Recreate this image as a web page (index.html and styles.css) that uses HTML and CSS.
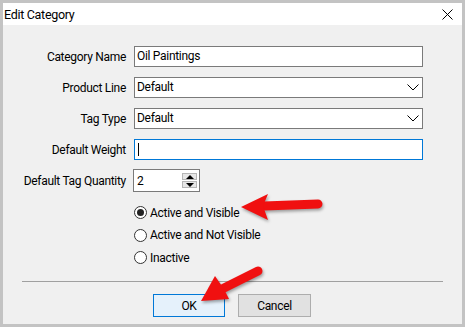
FILE: index.html
```html
<!DOCTYPE html>
<html lang="en">
<head>
  <meta charset="UTF-8" />
  <title>Edit Category</title>
  <link rel="stylesheet" href="styles.css">
</head>
<body>
  <div class="window">
    <div class="titlebar">
      <span class="title">Edit Category</span>
      <svg class="close" width="11" height="11" viewBox="0 0 11 11">
        <path d="M0.5 0.5 L10.5 10.5 M10.5 0.5 L0.5 10.5" stroke="#000" stroke-width="1" fill="none" />
      </svg>
    </div>

    <div class="content">
      <div class="form">
        <label>Category Name</label>
        <div class="field">Oil Paintings</div>

        <label>Product Line</label>
        <div class="field select">
          <span>Default</span>
          <svg class="chevron" width="12" height="7" viewBox="0 0 12 7"><polyline points="0.5,0.5 6,6 11.5,0.5" stroke="#000" fill="none" /></svg>
        </div>

        <label>Tag Type</label>
        <div class="field select">
          <span>Default</span>
          <svg class="chevron" width="12" height="7" viewBox="0 0 12 7"><polyline points="0.5,0.5 6,6 11.5,0.5" stroke="#000" fill="none" /></svg>
        </div>

        <label>Default Weight</label>
        <div class="field focused"><span class="caret"></span></div>

        <label class="spin-label">Default Tag Quantity</label>
        <div class="spin">
          <span>2</span>
          <div class="spin-btns">
            <span class="spin-btn"><i class="tri-up"></i></span>
            <span class="spin-btn"><i class="tri-down"></i></span>
          </div>
        </div>
      </div>

      <div class="radios">
        <div class="radio-row"><span class="radio checked"></span>Active and Visible</div>
        <div class="radio-row"><span class="radio"></span>Active and Not Visible</div>
        <div class="radio-row"><span class="radio"></span>Inactive</div>
      </div>

      <div class="sep"></div>

      <div class="buttons">
        <button class="btn primary">OK</button>
        <button class="btn">Cancel</button>
      </div>
    </div>
  </div>

  <!-- annotation arrows drawn over the dialog -->
  <svg class="arrows" width="465" height="327" viewBox="0 0 465 327">
    <line x1="264" y1="206" x2="318" y2="204" stroke="#f01010" stroke-width="9" stroke-linecap="round" />
    <polygon points="241,207 268,194 263,206 268,220" fill="#f01010" />
    <line x1="224" y1="288" x2="258" y2="271" stroke="#f01010" stroke-width="9" stroke-linecap="round" />
    <polygon points="201,301 215,276 224,289 229,299" fill="#f01010" />
  </svg>
</body>
</html>
```

FILE: styles.css
```css
body {
  margin: 0;
  font-family: Roboto, "Liberation Sans", sans-serif;
  font-size: 12px;
  letter-spacing: -0.3px;
  color: #000;
}
.window {
  width: 465px;
  height: 327px;
  box-sizing: border-box;
  border: 3px solid #c3c3c3;
  background: #f0f0f0;
}
.titlebar {
  height: 22px;
  background: #fff;
  display: flex;
  align-items: center;
  justify-content: space-between;
  padding: 0 9px 0 1px;
}
.title {
  font-size: 12.5px;
}
.close {
  display: block;
  margin-top: 1px;
}
.content {
  height: 299px;
  padding-top: 21px;
  box-sizing: border-box;
}
.form {
  display: grid;
  grid-template-columns: 123px 289px;
  grid-template-rows: 21px 21px 21px 21px 23px;
  column-gap: 8px;
  row-gap: 10px;
}
.form label {
  display: flex;
  align-items: center;
  justify-content: flex-end;
}
.field {
  box-sizing: border-box;
  height: 21px;
  background: #fff;
  border: 1px solid #7a7a7a;
  display: flex;
  align-items: center;
  justify-content: space-between;
  padding: 0 3px 1px 2px;
}
.field.focused {
  border-color: #0078d7;
}
.chevron {
  display: block;
  margin-top: 1px;
}
.caret {
  width: 1px;
  height: 13px;
  background: #000;
  margin-left: 1px;
}
.spin-label {
  margin-top: -1px;
}
.spin {
  margin-top: -1px;
  margin-left: -1px;
  box-sizing: border-box;
  width: 67px;
  height: 23px;
  background: #fff;
  border: 1px solid #7a7a7a;
  display: flex;
  align-items: center;
  justify-content: space-between;
  padding: 0 2px 0 3px;
}
.spin-btns {
  display: flex;
  flex-direction: column;
  gap: 1px;
}
.spin-btn {
  width: 15px;
  height: 7px;
  box-sizing: border-box;
  background: #e6e6e6;
  border: 1px solid #b5b5b5;
  display: flex;
  align-items: center;
  justify-content: center;
}
.tri-up {
  width: 0;
  height: 0;
  border-left: 4px solid transparent;
  border-right: 4px solid transparent;
  border-bottom: 4px solid #000;
}
.tri-down {
  width: 0;
  height: 0;
  border-left: 4px solid transparent;
  border-right: 4px solid transparent;
  border-top: 4px solid #000;
}
.radios {
  margin-top: 8.5px;
  padding-left: 131px;
}
.radio-row {
  height: 22.5px;
  display: flex;
  align-items: center;
}
.radio {
  width: 13px;
  height: 13px;
  box-sizing: border-box;
  border: 1px solid #333;
  border-radius: 50%;
  background: #fff;
  margin-right: 3px;
  display: flex;
  align-items: center;
  justify-content: center;
}
.radio.checked::after {
  content: "";
  width: 7px;
  height: 7px;
  border-radius: 50%;
  background: #222;
}
.sep {
  margin: 12px 19px 0 19px;
  height: 1px;
  background: #a0a0a0;
}
.buttons {
  display: flex;
  gap: 13px;
  padding-left: 150px;
  margin-top: 12px;
}
.btn {
  width: 73px;
  height: 23px;
  box-sizing: border-box;
  font-family: inherit;
  font-size: 12px;
  letter-spacing: -0.3px;
  color: #000;
  background: #e1e1e1;
  border: 1px solid #adadad;
  padding: 0;
}
.btn.primary {
  width: 72px;
  background: #e5f1fb;
  border-color: #0078d7;
}
.arrows {
  position: absolute;
  top: 0;
  left: 0;
  pointer-events: none;
  filter: drop-shadow(1px 2px 1.5px rgba(0, 0, 0, 0.35));
}
```
